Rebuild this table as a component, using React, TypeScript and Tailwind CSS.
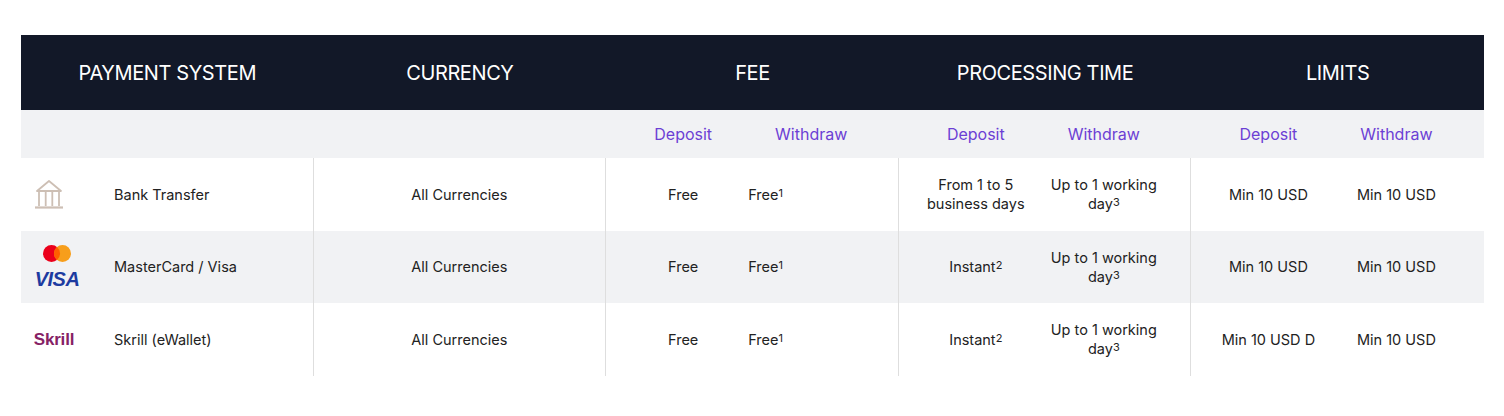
import React from 'react'

const FONT = { fontFamily: 'Inter, "Noto Sans", sans-serif' }

const BankIcon = () => (
  <svg
    width="30"
    height="31"
    viewBox="0 0 30 31"
    fill="none"
    stroke="#cdbfb4"
    strokeWidth="1.8"
    className="-translate-x-[8px]"
  >
    <path d="M3 12 L15 2 L27 12 Z" strokeLinejoin="round" />
    <path d="M5 12 V27 M11.7 12 V27 M18.3 12 V27 M25 12 V27" />
    <path d="M1 28.5 H29" strokeWidth="2.2" />
  </svg>
)

const CardsIcon = () => (
  <div className="flex flex-col items-center">
    <svg width="32" height="19" viewBox="0 0 32 19">
      <circle cx="10.5" cy="9.5" r="8.5" fill="#eb001b" />
      <circle cx="21.5" cy="9.5" r="8.5" fill="#f79e1b" />
      <path d="M16 3 A8.5 8.5 0 0 1 16 16 A8.5 8.5 0 0 1 16 3 Z" fill="#ff5f00" />
    </svg>
    <span
      className="mt-[6px] text-[20px] leading-none font-extrabold italic tracking-[-0.5px] text-[#1d3ba0]"
      style={{ fontFamily: '"Liberation Sans", Arial, sans-serif' }}
    >
      VISA
    </span>
  </div>
)

const SkrillIcon = () => (
  <span
    className="-translate-x-[3px] text-[17px] leading-none font-black tracking-[-0.2px] text-[#862165]"
    style={{ fontFamily: '"Liberation Sans", Arial, sans-serif' }}
  >
    Skrill
  </span>
)

type Row = {
  icon: React.ReactNode
  name: string
  feeDep: React.ReactNode
  feeWd: React.ReactNode
  procDep: React.ReactNode
  procWd: React.ReactNode
  limDep: string
  limWd: string
}

const Sup = ({ n }: { n: number }) => (
  <sup className="relative -top-[3px] text-[11px]">{n}</sup>
)

const upTo = (
  <span>
    Up to 1 working
    <br />
    day
    <Sup n={3} />
  </span>
)

const freeOne = (
  <span>
    Free
    <Sup n={1} />
  </span>
)

const instant = (
  <span>
    Instant
    <Sup n={2} />
  </span>
)

const rows: Row[] = [
  {
    icon: <BankIcon />,
    name: 'Bank Transfer',
    feeDep: 'Free',
    feeWd: freeOne,
    procDep: (
      <span>
        From 1 to 5
        <br />
        business days
      </span>
    ),
    procWd: upTo,
    limDep: 'Min 10 USD',
    limWd: 'Min 10 USD',
  },
  {
    icon: <CardsIcon />,
    name: 'MasterCard / Visa',
    feeDep: 'Free',
    feeWd: freeOne,
    procDep: instant,
    procWd: upTo,
    limDep: 'Min 10 USD',
    limWd: 'Min 10 USD',
  },
  {
    icon: <SkrillIcon />,
    name: 'Skrill (eWallet)',
    feeDep: 'Free',
    feeWd: freeOne,
    procDep: instant,
    procWd: upTo,
    limDep: 'Min 10 USD D',
    limWd: 'Min 10 USD',
  },
]

const Pair = ({
  left,
  right,
  rightStart,
}: {
  left: React.ReactNode
  right: React.ReactNode
  rightStart?: boolean
}) => (
  <div className="grid h-full grid-cols-[128px_128px] pl-[13px]">
    <div className="flex items-center justify-center text-center">{left}</div>
    <div
      className={`flex items-center text-center ${rightStart ? 'justify-start pl-[1px]' : 'justify-center'}`}
    >
      {right}
    </div>
  </div>
)

const App = () => {
  return (
    <div className="min-h-[416px] bg-white pt-[35px] pl-[21px]" style={FONT}>
      <div className="w-[1463px]">
        <div className="grid h-[75px] grid-cols-5 bg-[#121828] text-[20px] tracking-[-0.4px] text-white">
          {['PAYMENT SYSTEM', 'CURRENCY', 'FEE', 'PROCESSING TIME', 'LIMITS'].map((h) => (
            <div key={h} className="flex items-center justify-center">
              {h}
            </div>
          ))}
        </div>

        <div className="grid h-[48px] grid-cols-5 bg-[#f1f2f4] text-[16px] text-[#6c3fd4]">
          <div />
          <div />
          <Pair left="Deposit" right="Withdraw" />
          <Pair left="Deposit" right="Withdraw" />
          <Pair left="Deposit" right="Withdraw" />
        </div>

        {rows.map((r, i) => (
          <div
            key={r.name}
            className={`grid h-[72.5px] grid-cols-5 text-[14.5px] leading-[19px] text-[#222222] ${i === 1 ? 'bg-[#f1f2f4]' : 'bg-white'}`}
          >
            <div className="flex items-center border-r border-[#dedede]">
              <div className="flex w-[93px] justify-start pl-[12px]">
                <div className="flex w-[48px] justify-center">{r.icon}</div>
              </div>
              <span>{r.name}</span>
            </div>
            <div className="flex items-center justify-center border-r border-[#dedede]">
              All Currencies
            </div>
            <div className="border-r border-[#dedede]">
              <Pair left={r.feeDep} right={r.feeWd} rightStart />
            </div>
            <div className="border-r border-[#dedede]">
              <Pair left={r.procDep} right={r.procWd} />
            </div>
            <div>
              <Pair left={r.limDep} right={r.limWd} />
            </div>
          </div>
        ))}
      </div>
    </div>
  )
}

export default App
